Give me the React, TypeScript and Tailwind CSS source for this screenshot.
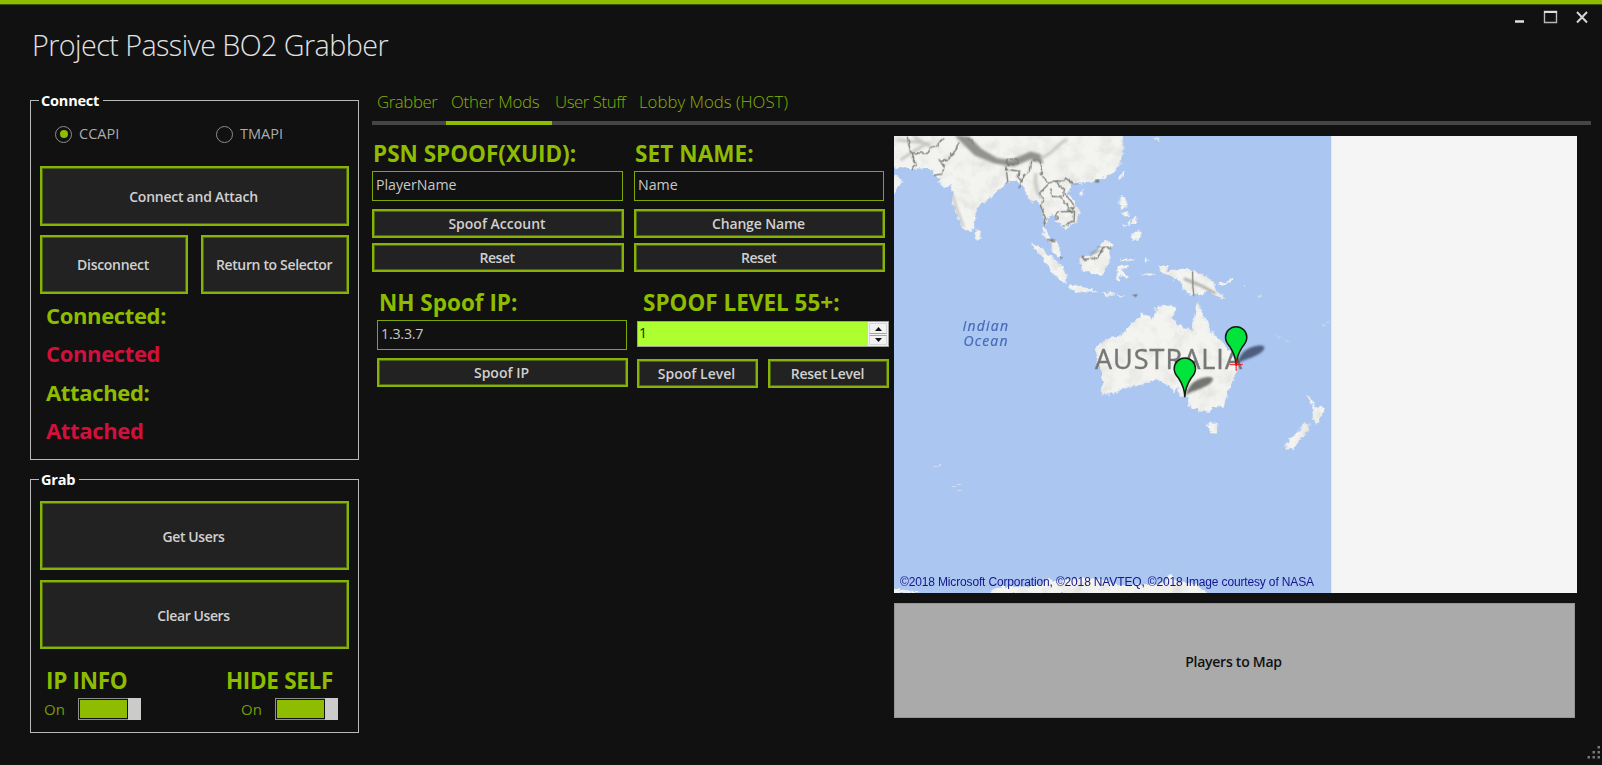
import React from "react";

function Button({ label, className }: { label: string; className: string }) {
  return (
    <button
      className={`flex items-center justify-center border-2 border-[#86b305] bg-[#222] pt-[1px] pr-[2px] text-[14px] leading-none font-semibold whitespace-nowrap text-[#d0d0d0] outline outline-1 -outline-offset-3 outline-[#4e6611] ${className}`}
    >
      {label}
    </button>
  );
}

function Heading({ text, className = "" }: { text: string; className?: string }) {
  return (
    <div className={`h-6 text-[22.500px] leading-6 font-bold whitespace-nowrap text-[#8ebc00] ${className}`}>
      {text}
    </div>
  );
}

function Field({ value, className = "" }: { value: string; className?: string }) {
  return (
    <div className={`h-[30px] border border-[#7fa704] pt-[4px] pl-[3px] text-[14.200px] leading-[18px] text-[#c8c8c8] ${className}`}>
      {value}
    </div>
  );
}

function Group({ title, className, children }: { title: string; className: string; children: React.ReactNode }) {
  return (
    <section className={`border border-[#b9b9b9] pr-[9px] pl-[9px] ${className}`}>
      <div className="-mt-[9px] -ml-px h-[18px] w-fit bg-[#111] pr-[4px] pl-[2px] text-[14.5px] leading-[18px] font-bold tracking-[-0.2px] text-white">
        {title}
      </div>
      {children}
    </section>
  );
}

function Radio({ label, checked, className = "" }: { label: string; checked?: boolean; className?: string }) {
  return (
    <div className={`flex items-center gap-[7px] text-[14.5px] leading-6 text-[#acacac] ${className}`}>
      <span className="flex size-[17px] items-center justify-center rounded-full border-[1.5px] border-[#8d8d8d]">
        {checked && <span className="size-[8px] rounded-full bg-[#8ebc00]" />}
      </span>
      {label}
    </div>
  );
}

function Toggle({ title, headingClass = "", rowClass = "" }: { title: string; headingClass?: string; rowClass?: string }) {
  return (
    <div>
      <Heading text={title} className={`tracking-[-0.3px] ${headingClass}`} />
      <div className={`mt-[5px] flex h-[22px] items-center ${rowClass}`}>
        <span className="w-[34px] text-[15px] leading-5 text-[#769b06]">On</span>
        <span className="flex h-[22px] w-[63px] border border-r-0 border-[#8f8f8f] bg-[#111] pl-[1px]">
          <span className="my-[1px] flex-1 bg-[#8ebc00]" />
          <span className="-my-px ml-px w-[13px] bg-[#cbcbc9]" />
        </span>
      </div>
    </div>
  );
}

function Pin({ x, y, shade }: { x: number; y: number; shade: string }) {
  return (
    <g transform={`translate(${x} ${y})`}>
      <path d="M2 -2 C8 -26 22 -46 46 -54 C66 -61 88 -62 84 -50 C78 -35 48 -24 28 -17 C16 -13 8 -8 2 -2Z" fill={shade} opacity=".65" filter="url(#shade)" />
      <path d="M0 0 C-1 -24 -8 -39 -19 -56 C-28 -66 -32 -74 -32 -84 A32 32 0 0 1 32 -84 C32 -74 28 -66 19 -56 C8 -39 1 -24 0 0Z" fill="#00e43c" stroke="#111c11" strokeWidth="4.500" strokeLinejoin="round" />
    </g>
  );
}

function WorldMap() {
  return (
    <svg className="block h-[457px] w-[683px]" viewBox="893.5 136 683 457">
      <defs>
        <filter id="coast" x="-5%" y="-5%" width="110%" height="110%">
          <feTurbulence type="fractalNoise" baseFrequency="0.2" numOctaves="3" seed="4" result="n" />
          <feDisplacementMap in="SourceGraphic" in2="n" scale="6" xChannelSelector="R" yChannelSelector="G" />
        </filter>
        <filter id="relief" x="0" y="0" width="100%" height="100%">
          <feTurbulence type="fractalNoise" baseFrequency="0.07" numOctaves="4" seed="9" />
          <feColorMatrix values="0 0 0 0 .5  0 0 0 0 .5  0 0 0 0 .47  .8 0 0 0 -.37" />
          <feComposite in2="SourceGraphic" operator="in" result="r" />
          <feMerge>
            <feMergeNode in="SourceGraphic" />
            <feMergeNode in="r" />
          </feMerge>
        </filter>
        <filter id="soft" x="-20%" y="-20%" width="140%" height="140%">
          <feGaussianBlur stdDeviation="3" />
        </filter>
        <filter id="shade" x="-20%" y="-20%" width="140%" height="140%">
          <feGaussianBlur stdDeviation="2.500" />
        </filter>
        <filter id="wobble" x="-5%" y="-5%" width="110%" height="110%">
          <feTurbulence type="fractalNoise" baseFrequency="0.06" numOctaves="2" seed="7" />
          <feDisplacementMap in="SourceGraphic" scale="14" xChannelSelector="R" yChannelSelector="G" />
        </filter>
        <clipPath id="world">
          <rect x="893.5" y="136" width="437.500" height="457" />
        </clipPath>
      </defs>
      <rect x="893.5" y="136" width="683" height="457" fill="#f5f5f5" />
      <g clipPath="url(#world)">
        <rect x="893.5" y="136" width="437.500" height="457" fill="#abc6f1" />

        <g filter="url(#coast)">
          <g fill="#f3f3f0" filter="url(#relief)">
            {/* Asia and the islands to New Guinea */}
            <g transform="translate(890 130) scale(.33333)">
              <path d="M0 0V112L60 117L110 114L132 126L126 138L152 144L143 158L162 172L180 165L186 190L186 215L202 262L222 303L240 305L256 272L256 238L290 210L320 182L352 156L378 152L398 165L408 195L425 218L440 210L452 235L463 285L455 292L458 312L480 342L488 366L512 386L508 360L503 340L485 328L470 312L464 288L470 262L488 256L502 276L525 298L562 274L568 242L550 215L530 190L545 163L590 158L640 145L672 122L690 98L700 64L692 0Z" />
              <path d="M0 132L25 140L40 158L20 175L12 192L0 194Z" />
              <path d="M260 298L272 312L270 328L257 330L255 312Z" />
              <path d="M565 185L582 178L576 198L568 196Z" />
              <path d="M695 124L703 124L693 150L684 148Z" />
              <path d="M690 198L705 203L707 224L696 240L687 222Z" />
              <path d="M690 243L703 250L712 244L716 256L704 262ZM708 276L720 270L722 282L712 290ZM724 266L736 262L738 280L728 278ZM700 284L708 288L702 294ZM726 308L738 312L748 298L752 322L738 334L728 326L718 320Z" />
              <path d="M418 340L448 350L490 386L516 412L528 432L528 458L505 450L470 408L445 370Z" />
              <path d="M530 463L560 467L590 474L626 486L592 488L540 479ZM632 490L656 488L680 492L664 498ZM680 498L700 494L690 502Z" />
              <path d="M568 380L602 380L625 352L648 330L670 345L656 360L660 382L648 408L636 437L600 430L578 422L568 400Z" />
              <path d="M678 412L712 404L716 410L692 420L712 438L704 444L688 434L688 458L678 452L676 430Z" />
              <path d="M690 388L720 386L734 390L710 394ZM764 380L774 386L768 398ZM748 432L774 430L800 434L770 438Z" />
              <path d="M804 408L830 408L834 424L850 420L872 416L902 418L940 436L970 456L978 478L1006 506L982 504L952 482L930 496L886 492L874 456L830 436L812 424Z" />
              <path d="M980 460L1008 456L1024 444L1026 450L1008 464L990 466ZM1058 466L1066 468L1062 474ZM1106 496L1114 498L1108 503Z" />
              <path d="M790 24L808 22L802 36Z" opacity=".7" />
            </g>
            {/* Australia and New Zealand */}
            <g transform="translate(1080 290) scale(.33333)">
              <path d="M48 168L80 146L120 138L150 105L185 72L218 85L222 60L245 45L285 50L288 60L275 85L305 110L335 120L345 62L352 38L362 60L370 85L382 92L390 122L430 160L450 188L470 222L465 260L440 310L430 350L402 352L385 366L350 360L325 346L322 322L306 318L290 312L298 286L282 306L264 284L230 270L180 284L120 298L95 313L64 312L66 250L44 202Z" />
              <path d="M378 400L412 400L408 426L394 434Z" />
              <path d="M678 314L692 322L698 342L714 352L735 350L722 376L706 404L696 372L700 356Z" />
              <path d="M672 396L687 400L685 422L652 455L638 478L610 470L625 450L655 425Z" />
            </g>
            {/* Antarctica */}
            <g transform="translate(880 440) scale(.33333)">
              <path d="M0 444L60 448L125 460H0ZM316 462L350 440L420 442L480 434L500 412L520 424L640 412L720 436L856 430L870 396L884 424L950 434L988 462Z" />
            </g>
          </g>
        </g>

        <g transform="translate(890 130) scale(.33333)" fill="none">
          <g filter="url(#soft)">
            <path d="M192 16L236 20L272 56L320 84L360 90L420 64L452 74L458 102L420 88L370 110L310 100L252 76Z" fill="#92928e" />
            <path d="M450 84C490 72 500 40 530 28M436 130C430 160 440 190 452 204" stroke="#c9c9c5" strokeWidth="10" />
            <path d="M186 190L200 240L220 290" stroke="#c0c0bc" strokeWidth="6" />
            <path d="M20 30L110 40L60 70L30 90M70 20L120 50" stroke="#c4c4c0" strokeWidth="8" />
            <path d="M600 372L626 360M880 446L930 466L975 490" stroke="#a0a09c" strokeWidth="7" />
          </g>
          <g stroke="#7d7d79" strokeWidth="4" strokeLinejoin="round" filter="url(#wobble)">
            <path d="M50 20L60 68L76 98L64 120M60 68L112 70L120 54L140 46L158 22" />
            <path d="M206 36L192 62L170 88L148 92L160 110L156 132L130 136" />
            <path d="M236 26L252 40M346 88L380 86L384 100L352 104ZM346 108L352 160M346 118L388 124L380 140L392 152L388 172" />
            <path d="M446 86L420 96L416 124L398 136L392 160M446 86L456 120L450 136L476 160" />
            <path d="M476 160L450 186L456 210L452 232L466 268L458 288M476 160L492 152L522 178L518 198L486 200L480 172" />
            <path d="M492 152L520 154L524 144L548 160L560 164M500 200L530 220L534 240L552 232L524 190M500 270L498 246L552 244L550 276L518 288" />
            <path d="M470 328L494 336M570 378L582 388L624 384L638 352L662 352M620 350L640 354" />
          </g>
          <path d="M906 424L907 472L910 498" stroke="#858581" strokeWidth="4" />
          <path d="M614 150L626 148L626 158L614 158ZM506 380L518 382L510 388ZM724 494L742 492L736 502Z" fill="#7c8288" />
        </g>

        <g transform="translate(880 440) scale(.33333)" fill="#cfdef5">
          <path d="M160 78h14v3h-14zM176 72h6v6h-6zM214 138h12v3h-12zM230 132h12v3h-12zM232 150h12v3h-12z" />
        </g>
        <g transform="translate(1080 290) scale(.33333)" fill="#bed2f3">
          <path d="M580 130l22 12l-4 4zM604 146l24 8l-6 4zM724 100l14 6l-12 6zM738 92l10 4l-8 6zM536 14l10 4l-8 4z" />
        </g>

        <g fontFamily="'Open Sans', 'Noto Sans', sans-serif">
          <text x="1094.5" y="369" fontSize="27" textLength="147" fill="#777" stroke="#777" strokeWidth=".4">AUSTRALIA</text>
          <g fontSize="14" fontStyle="italic" fill="#4569b6" stroke="#4569b6" strokeWidth=".2">
            <text x="962" y="330.500" textLength="45.500">Indian</text>
            <text x="963" y="345.500" textLength="44">Ocean</text>
          </g>
        </g>

        <g transform="translate(1080 290) scale(.33333)">
          <Pin x={467} y={226} shade="#1b2640" />
          <Pin x={313} y={320} shade="#303030" />
          <path d="M447 224H487M467 206V243" stroke="#f01414" strokeWidth="3" />
        </g>
        <text x="899.5" y="585.500" fontSize="12" textLength="414" fill="#15158c" fontFamily="'Liberation Sans', Arial, sans-serif">
          ©2018 Microsoft Corporation, ©2018 NAVTEQ, ©2018 Image courtesy of NASA
        </text>
      </g>
    </svg>
  );
}

export default function App() {
  return (
    <div className="flex h-[765px] w-[1602px] flex-col overflow-hidden border-t-4 border-[#8ebc00] bg-[#111] font-['Open_Sans','Noto_Sans',sans-serif] text-white">
      <header className="flex h-[86px] shrink-0 justify-between border-t border-[#3f5009] pr-[13px] pl-[32px]">
        <h1 className="mt-[20px] text-[28.700px] leading-[40px] font-light tracking-[-0.56px] whitespace-nowrap text-[#e2e2e2]">
          Project Passive BO2 Grabber
        </h1>
        <svg className="mt-[5px] h-[16px] w-[75px]" viewBox="1514 10 75 16" fill="none">
          <path d="M1515 21.500h9" stroke="#e0e0e0" strokeWidth="2.500" />
          <path d="M1544.500 11.500h12v11h-12z" stroke="#b4b6ba" strokeWidth="1.400" />
          <path d="M1544 12h13" stroke="#dedede" strokeWidth="2" />
          <path d="M1577 12l10 10.500M1587 12l-10 10.500" stroke="#d4d4d4" strokeWidth="2" />
        </svg>
      </header>

      <div className="flex flex-1">
        <aside className="ml-[30px] w-[329px] shrink-0">
          <Group title="Connect" className="mt-[10px] h-[360px]">
            <div className="mt-[12px] flex h-6 pl-[15px]">
              <Radio label="CCAPI" checked className="w-[161px]" />
              <Radio label="TMAPI" />
            </div>
            <Button label="Connect and Attach" className="mt-5 h-[60px] w-[309px] tracking-[-0.25px]" />
            <div className="mt-[9px] flex justify-between">
              <Button label="Disconnect" className="h-[59px] w-[148px] tracking-[-0.3px]" />
              <Button label="Return to Selector" className="h-[59px] w-[148px] tracking-[-0.35px]" />
            </div>
            <div className="mt-[2px] pl-[6px] text-[22px] leading-[38.300px] font-bold tracking-[-0.35px] text-[#8ebc00]">
              <div>Connected:</div>
              <div className="text-[#d2103c]">Connected</div>
              <div>Attached:</div>
              <div className="text-[#d2103c]">Attached</div>
            </div>
          </Group>

          <Group title="Grab" className="mt-[19px] h-[254px]">
            <Button label="Get Users" className="mt-[12px] h-[69px] w-[309px] pt-[3px] tracking-[-0.4px]" />
            <Button label="Clear Users" className="mt-[10px] h-[69px] w-[309px] pt-[3px] tracking-[-0.4px]" />
            <div className="mt-[20px] flex justify-between pr-[11px] pl-[4px]">
              <Toggle title="IP INFO" headingClass="pl-[2px]" />
              <Toggle title="HIDE SELF" headingClass="-ml-[5px] pr-[5px]" rowClass="justify-end" />
            </div>
          </Group>
        </aside>

        <main className="ml-[13px] w-[1219px] shrink-0">
          <nav className="flex h-[35px] border-b-4 border-[#454545] text-[16.800px] leading-6 font-light text-[#86b206]">
            <span className="h-[35px] w-[74px] pl-[5px] tracking-[-0.4px]">Grabber</span>
            <span className="h-[35px] w-[106px] border-b-4 border-[#8ebc00] pl-[5px] tracking-[-0.22px]">Other Mods</span>
            <span className="h-[35px] w-[85px] pl-[3px] tracking-[-0.43px]">User Stuff</span>
            <span className="h-[35px] pl-[2px]">Lobby Mods (HOST)</span>
          </nav>

          <div className="flex">
            <div className="w-[521px] shrink-0">
              <div className="mt-[17px] flex gap-[10px]">
                <div className="w-[252px]">
                  <Heading text="PSN SPOOF(XUID):" className="pl-px" />
                  <Field value="PlayerName" className="mt-[5px] w-[251px]" />
                  <Button label="Spoof Account" className="mt-[8px] h-[29px] w-[252px]" />
                  <Button label="Reset" className="mt-[5px] h-[29px] w-[252px] tracking-[-0.45px]" />
                </div>
                <div className="w-[251px]">
                  <Heading text="SET NAME:" className="pl-px tracking-[0.1px]" />
                  <Field value="Name" className="mt-[5px] w-[250px]" />
                  <Button label="Change Name" className="mt-[8px] h-[29px] w-[251px] tracking-[-0.15px]" />
                  <Button label="Reset" className="mt-[5px] h-[29px] w-[251px] tracking-[-0.45px]" />
                </div>
              </div>

              <div className="mt-[19px] ml-[5px] flex gap-[9px]">
                <div className="w-[251px]">
                  <Heading text="NH Spoof IP:" className="pl-[2px]" />
                  <Field value="1.3.3.7" className="mt-[5px] w-[250px] tracking-[-0.2px]" />
                  <Button label="Spoof IP" className="mt-[8px] h-[29px] w-[251px]" />
                </div>
                <div className="w-[252px]">
                  <Heading text="SPOOF LEVEL 55+:" className="pl-[6px]" />
                  <div className="mt-[6px] flex h-[26px] justify-between border border-[#9c9f9a] bg-[#adff2f]">
                    <span className="pl-[1px] text-[14px] leading-[21px] text-[#1b2a08]">1</span>
                    <span className="flex w-[20px] flex-col gap-px bg-[#f0f0f0] p-[1px]">
                      <span className="flex h-[11px] items-center justify-center border border-[#d6d6d6] border-b-[#a5a5a5] bg-[#f2f2f2]">
                        <svg className="h-[4px] w-[7px]" viewBox="0 0 7 4"><path d="M3.500 0L7 4H0Z" fill="#111" /></svg>
                      </span>
                      <span className="flex h-[10px] items-center justify-center border border-[#d6d6d6] border-t-[#a5a5a5] bg-[#f2f2f2]">
                        <svg className="h-[4px] w-[7px]" viewBox="0 0 7 4"><path d="M0 0H7L3.500 4Z" fill="#111" /></svg>
                      </span>
                    </span>
                  </div>
                  <div className="mt-[12px] flex justify-between">
                    <Button label="Spoof Level" className="h-[29px] w-[121px]" />
                    <Button label="Reset Level" className="h-[29px] w-[121px] tracking-[-0.25px]" />
                  </div>
                </div>
              </div>
            </div>

            <div className="mt-[11px] ml-px">
              <WorldMap />
              <button className="mt-[10px] flex h-[115px] w-[681px] items-center justify-center border border-[#969696] bg-[#aaa] pt-px pr-[2px] text-[14px] font-semibold tracking-[-0.25px] text-[#111]">
                Players to Map
              </button>
            </div>
          </div>
        </main>
      </div>

      <div className="-mt-5 flex h-5 shrink-0 items-end justify-end pr-[2px] pb-[6px]">
        <svg className="size-[13px]" viewBox="0 0 13 13" fill="#777">
          <path d="M10.500 0h2.500v2.500h-2.500zM5.500 5h2.500v2.500h-2.500zM10.500 5h2.500v2.500h-2.500zM.5 10h2.500v2.500h-2.500zM5.500 10h2.500v2.500h-2.500zM10.500 10h2.500v2.500h-2.500z" />
        </svg>
      </div>
    </div>
  );
}
